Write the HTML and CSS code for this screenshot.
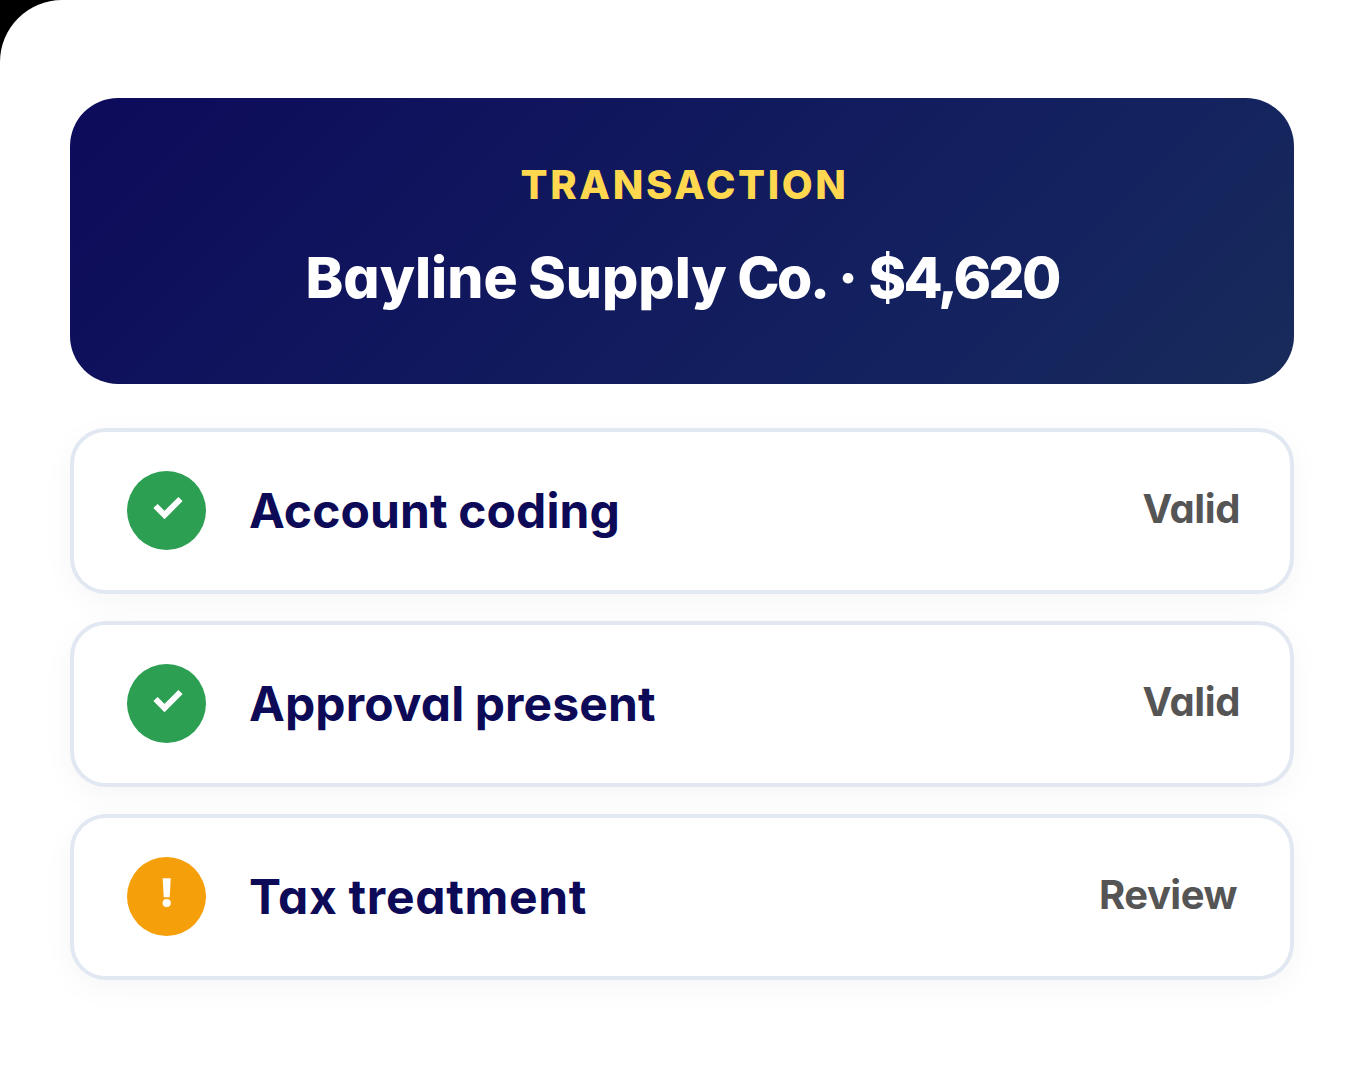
FILE: index.html
```html
<!DOCTYPE html>
<html lang="en">
<head>
  <meta charset="UTF-8">
  <meta name="viewport" content="width=device-width, initial-scale=1.0">
  <title>Transaction Review</title>
  <link rel="stylesheet" href="styles.css">
</head>
<body>
  <main class="panel">
    <!-- Transaction summary -->
    <section class="transaction">
      <div class="transaction-label">TRANSACTION</div>
      <div class="transaction-title">Bayline Supply <span class="company-type">Co.</span> · <span class="amount">$4,620</span></div>
    </section>

    <!-- Checks -->
    <div class="check-row">
      <span class="check-icon">
        <svg viewBox="0 0 79 79"><path d="M28.5 35 L37.5 44 L53.5 28" /></svg>
      </span>
      <span class="check-name">Account coding</span>
      <span class="check-status">Valid</span>
    </div>
    <div class="check-row">
      <span class="check-icon">
        <svg viewBox="0 0 79 79"><path d="M28.5 35 L37.5 44 L53.5 28" /></svg>
      </span>
      <span class="check-name">Approval present</span>
      <span class="check-status">Valid</span>
    </div>
    <div class="check-row">
      <span class="check-icon warning">
        <svg viewBox="0 0 79 79">
          <polygon points="35.7,21.2 43.7,21.2 42.7,40.2 36.7,40.2" />
          <circle cx="39.7" cy="46" r="4.1" />
        </svg>
      </span>
      <span class="check-name tax">Tax treatment</span>
      <span class="check-status review">Review</span>
    </div>
  </main>
</body>
</html>
```

FILE: styles.css
```css
* {
  box-sizing: border-box;
}

body {
  margin: 0;
  background-color: #000000;
  font-family: Inter, "Liberation Sans", sans-serif;
  font-feature-settings: "cv11";
}

.panel {
  height: 1082px;
  padding: 98px 68px 0 70px;
  background-color: #ffffff;
  border-top-left-radius: 62px;
  overflow: hidden;
}

/* Transaction summary */
.transaction {
  height: 285.5px;
  margin-bottom: 44px;
  padding-top: 63px;
  border-radius: 48px;
  background: linear-gradient(135deg, #0d0a5b 0%, #14235f 75%, #182b5a 100%);
  text-align: center;
  white-space: nowrap;
}

.transaction-label {
  padding-left: 5px;
  font-size: 40px;
  line-height: 48px;
  font-weight: 800;
  letter-spacing: 2.6px;
  color: #ffd84f;
}

.transaction-title {
  margin-top: 35px;
  font-size: 57px;
  line-height: 68px;
  font-weight: 800;
  letter-spacing: 0;
  word-spacing: -2px;
  color: #ffffff;
}

.company-type {
  letter-spacing: -2.5px;
}

.amount {
  letter-spacing: -2.8px;
}

/* Check rows */
.check-row {
  display: flex;
  align-items: center;
  height: 166px;
  margin-bottom: 27px;
  padding: 0 50px 0 53px;
  border: 4px solid #e2e8f2;
  border-radius: 36px;
  background-color: #ffffff;
  box-shadow: 0 8px 32px rgba(0, 0, 0, 0.04);
}

.check-icon {
  width: 79px;
  height: 79px;
  border-radius: 50%;
  background-color: #2c9f53;
}

.check-icon svg {
  display: block;
  width: 79px;
  height: 79px;
}

.check-icon path {
  fill: none;
  stroke: #ffffff;
  stroke-width: 6;
}

.check-icon.warning {
  background-color: #f59f0b;
}

.check-icon.warning svg {
  fill: #ffffff;
}

.check-name {
  margin-left: 43px;
  font-size: 48px;
  line-height: 58px;
  font-weight: 700;
  letter-spacing: 0.1px;
  word-spacing: -1px;
  color: #0d0a58;
}

.check-name.tax {
  letter-spacing: 0.7px;
}

.check-status {
  margin-left: auto;
  padding-bottom: 4px;
  font-size: 40px;
  line-height: 48px;
  font-weight: 700;
  letter-spacing: -0.4px;
  color: #555555;
}

.check-status.review {
  margin-right: 3px;
  letter-spacing: -0.5px;
}
```
